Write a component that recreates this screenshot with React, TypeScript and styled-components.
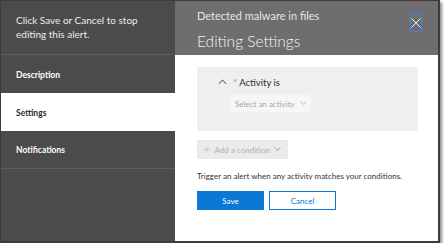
import React from "react";
import styled, { createGlobalStyle } from "styled-components";

const Global = createGlobalStyle`
  html, body { margin: 0; padding: 0; background: #ffffff; }
  body { font-family: Lato, "Open Sans", sans-serif; }
  * { box-sizing: border-box; }
`;

const Frame = styled.div`
  width: 440px;
  height: 243px;
  border: 1px solid #3c3c3c;
  border-right-width: 2px;
  border-bottom-width: 2px;
  box-shadow: 2px 2px 3px rgba(0, 0, 0, 0.45);
  display: grid;
  grid-template-columns: 174px 1fr;
  overflow: hidden;
  white-space: nowrap;
`;

const Side = styled.aside`
  background: #4b4b4b;
  display: flex;
  flex-direction: column;
`;

const Intro = styled.div`
  height: 54px;
  padding: 12px 12px 0 15px;
  color: #ececec;
  font-size: 10px;
  line-height: 14px;
  border-bottom: 1px solid #5e5e5e;
`;

const NavItem = styled.div<{ $active?: boolean; $last?: boolean }>`
  height: 38px;
  display: flex;
  align-items: center;
  padding: 1px 0 0 15px;
  font-size: 8.5px;
  font-weight: 700;
  color: ${(p) => (p.$active ? "#2b2b2b" : "#ffffff")};
  background: ${(p) => (p.$active ? "#ffffff" : "transparent")};
  border-bottom: ${(p) => (p.$last ? "1px solid #5e5e5e" : "none")};
`;

const Main = styled.main`
  display: flex;
  flex-direction: column;
  background: #ffffff;
`;

const Header = styled.header`
  height: 54px;
  background: #6e6e6e;
  display: flex;
  justify-content: space-between;
  padding: 7px 16px 0 22px;
`;

const Titles = styled.div`
  display: flex;
  flex-direction: column;
`;

const Sub = styled.div`
  color: #e6e6e6;
  font-size: 11px;
  line-height: 16px;
`;

const Title = styled.div`
  color: #f6f6f6;
  font-size: 15.5px;
  font-weight: 300;
  line-height: 22px;
  margin-top: 6px;
`;

const Close = styled.button`
  margin-top: 6px;
  width: 12px;
  height: 18px;
  padding: 0;
  border: 1px solid #3b86d0;
  background: transparent;
  display: flex;
  align-items: center;
  justify-content: center;
`;

const Body = styled.div`
  padding: 12px 20px 0 22px;
  display: flex;
  flex-direction: column;
  align-items: flex-start;
`;

const Condition = styled.div`
  align-self: stretch;
  height: 64px;
  background: #efefef;
  padding: 8px 0 0 21px;
  display: flex;
  flex-direction: column;
  gap: 6px;
`;

const CondRow = styled.div`
  display: flex;
  align-items: center;
  gap: 6px;
  font-size: 9.5px;
  color: #2e2e2e;
  height: 14px;
`;

const Star = styled.span`
  color: #e08a2a;
`;

const Select = styled.div`
  margin-left: 12px;
  width: 81px;
  height: 17px;
  background: #f6f6f6;
  display: flex;
  align-items: center;
  padding-left: 5px;
  gap: 5px;
  font-size: 8px;
  color: #a6a6a6;
`;

const AddBtn = styled.div`
  margin-top: 9px;
  width: 91px;
  height: 19px;
  background: #ebebeb;
  display: flex;
  align-items: center;
  padding-left: 6px;
  gap: 4px;
  font-size: 8px;
  color: #b0b0b0;
`;

const Plus = styled.span`
  font-size: 13px;
  line-height: 13px;
  font-weight: 300;
`;

const Note = styled.p`
  margin: 11px 0 0 0;
  font-size: 8px;
  line-height: 12px;
  color: #333333;
`;

const Buttons = styled.div`
  margin-top: 9px;
  display: flex;
  gap: 5px;
`;

const Btn = styled.button<{ $primary?: boolean }>`
  width: 67px;
  height: 19px;
  padding: 0;
  font-family: inherit;
  font-size: 8px;
  border: 1px solid #0a78d4;
  background: ${(p) => (p.$primary ? "#0a78d4" : "#ffffff")};
  color: ${(p) => (p.$primary ? "#ffffff" : "#0a78d4")};
`;

const Chevron = ({ up, color, size = 8 }: { up?: boolean; color: string; size?: number }) => (
  <svg width={size} height={size * 0.6} viewBox="0 0 10 6" fill="none">
    <path d={up ? "M1 5.5 L5 1 L9 5.5" : "M1 0.5 L5 5 L9 0.5"} stroke={color} strokeWidth="1.1" />
  </svg>
);

export default function App() {
  return (
    <>
      <Global />
      <Frame>
        <Side>
          <Intro>
            Click Save or Cancel to stop
            <br />
            editing this alert.
          </Intro>
          <NavItem>Description</NavItem>
          <NavItem $active>Settings</NavItem>
          <NavItem $last>Notifications</NavItem>
        </Side>
        <Main>
          <Header>
            <Titles>
              <Sub>Detected malware in files</Sub>
              <Title>Editing Settings</Title>
            </Titles>
            <Close aria-label="Close">
              <svg width="10" height="10" viewBox="0 0 10 10">
                <path d="M0.5 0.5 L9.5 9.5 M9.5 0.5 L0.5 9.5" stroke="#f0f0f0" strokeWidth="1" />
              </svg>
            </Close>
          </Header>
          <Body>
            <Condition>
              <CondRow>
                <Chevron up color="#444" size={9} />
                <span>
                  <Star>*</Star> Activity is
                </span>
              </CondRow>
              <Select>
                Select an activity
                <Chevron color="#b0b0b0" size={7} />
              </Select>
            </Condition>
            <AddBtn>
              <Plus>+</Plus>
              Add a condition
              <Chevron color="#888" size={7} />
            </AddBtn>
            <Note>Trigger an alert when any activity matches your conditions.</Note>
            <Buttons>
              <Btn $primary>Save</Btn>
              <Btn>Cancel</Btn>
            </Buttons>
          </Body>
        </Main>
      </Frame>
    </>
  );
}
